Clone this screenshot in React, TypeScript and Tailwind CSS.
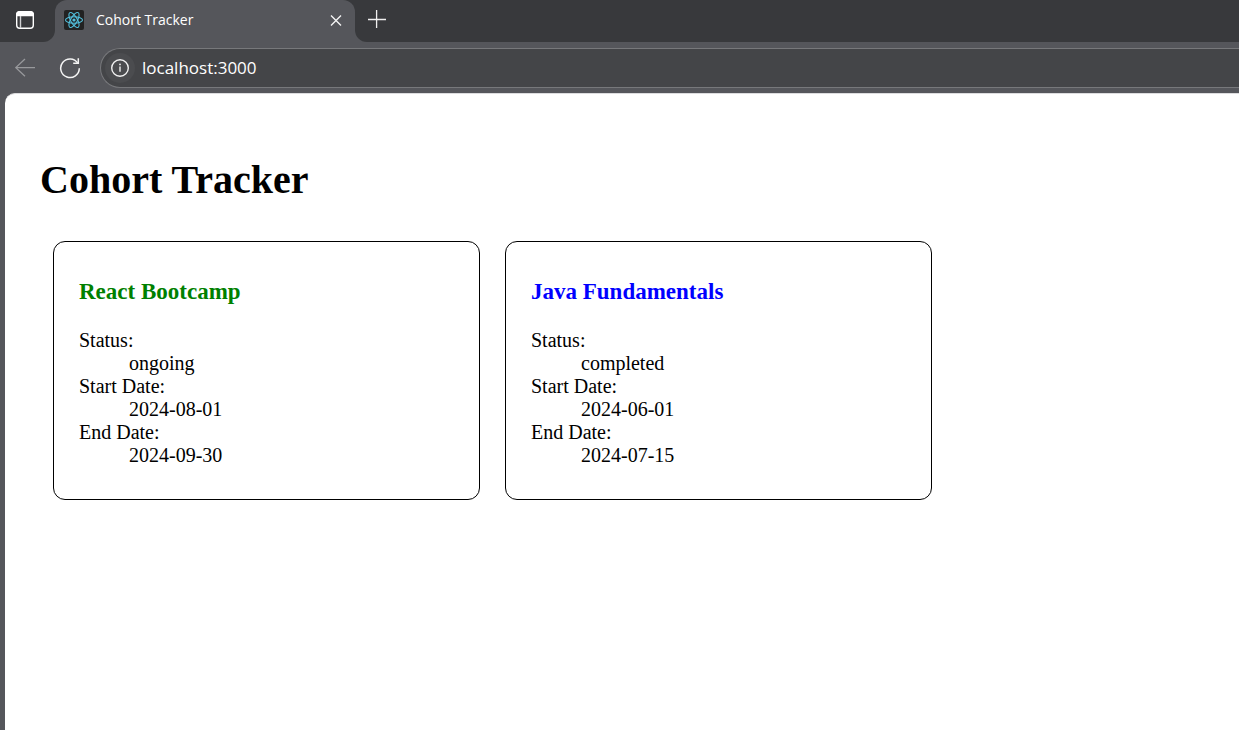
type Cohort = {
  name: string;
  status: "ongoing" | "completed";
  start: string;
  end: string;
};

const cohorts: Cohort[] = [
  { name: "React Bootcamp", status: "ongoing", start: "2024-08-01", end: "2024-09-30" },
  { name: "Java Fundamentals", status: "completed", start: "2024-06-01", end: "2024-07-15" },
];

function TabActionsIcon() {
  return (
    <svg width="20" height="20" viewBox="0 0 20 20" fill="none" stroke="#fff" strokeWidth="1.4" aria-hidden="true">
      <rect x="1.7" y="1.7" width="16.6" height="16.6" rx="3" />
      <path d="M1.7 5.5V4.7a3 3 0 0 1 3-3h10.6a3 3 0 0 1 3 3v.8z" fill="#fff" />
      <path d="M5.5 6v12" stroke="#d0d0d2" />
    </svg>
  );
}

function ReactIcon() {
  return (
    <svg width="20" height="20" viewBox="0 0 20 20" fill="none" stroke="#53c1de" strokeWidth="1.1" aria-hidden="true">
      <rect width="20" height="20" rx="2" fill="#222222" stroke="none" />
      <ellipse cx="10" cy="10" rx="8.5" ry="3.3" />
      <ellipse cx="10" cy="10" rx="8.5" ry="3.3" transform="rotate(60 10 10)" />
      <ellipse cx="10" cy="10" rx="8.5" ry="3.3" transform="rotate(120 10 10)" />
      <circle cx="10" cy="10" r="1.6" fill="#53c1de" stroke="none" />
    </svg>
  );
}

function CloseIcon() {
  return (
    <svg width="12" height="12" viewBox="0 0 12 12" stroke="#f4f4f4" strokeWidth="1.4" aria-hidden="true">
      <path d="M1 1.5l10 10M11 1.5l-10 10" />
    </svg>
  );
}

function PlusIcon() {
  return (
    <svg width="18" height="18" viewBox="0 0 18 18" stroke="#f0f0f0" strokeWidth="1.3" aria-hidden="true">
      <path d="M8.6 0v18M0 9.5h18" />
    </svg>
  );
}

function BackIcon() {
  return (
    <svg width="20" height="20" viewBox="0 0 20 20" fill="none" stroke="#98999c" strokeWidth="1.3" aria-hidden="true">
      <path d="M20 9.6H.8M10 1L.8 9.6l9.2 8.6" />
    </svg>
  );
}

function ReloadIcon() {
  return (
    <svg width="22" height="22" viewBox="0 0 22 22" fill="none" stroke="#f4f4f4" strokeWidth="1.5" aria-hidden="true">
      <path d="M18.8 6.2A9.3 9.3 0 1 0 20.3 11.3" />
      <path d="M19.3 1.3v5h-5.1" />
    </svg>
  );
}

function InfoIcon() {
  return (
    <svg width="20" height="20" viewBox="0 0 20 20" fill="none" stroke="#f0f0f0" strokeWidth="1.4" aria-hidden="true">
      <circle cx="10" cy="10" r="8.3" />
      <path d="M10 8.6v5.2" />
      <circle cx="10" cy="6.4" r=".9" fill="#f0f0f0" stroke="none" />
    </svg>
  );
}

function BrowserChrome() {
  return (
    <header className="font-['Open_Sans',sans-serif] text-white">
      <div className="flex h-[42px]">
        <div className="flex w-[55px] items-start rounded-br-xl bg-[#38393c] pl-[15px] pt-2.5">
          <button aria-label="Tab actions" type="button">
            <TabActionsIcon />
          </button>
        </div>
        <div className="w-[300px] bg-[linear-gradient(#38393c_50%,#55565b_50%)]">
          <div className="flex h-full items-start rounded-t-xl bg-[#55565b] pl-[9px] pr-[13px]">
            <div className="flex h-10 w-full items-center">
              <ReactIcon />
              <span className="ml-3 flex-1 text-sm">Cohort Tracker</span>
              <button aria-label="Close tab" type="button">
                <CloseIcon />
              </button>
            </div>
          </div>
        </div>
        <div className="flex flex-1 items-start rounded-bl-xl bg-[#38393c] pl-[13px] pt-2.5">
          <button aria-label="New tab" type="button">
            <PlusIcon />
          </button>
        </div>
      </div>
      <div className="flex h-[51px] items-center pl-[15px]">
        <button aria-label="Back" type="button" disabled>
          <BackIcon />
        </button>
        <button aria-label="Reload" type="button" className="ml-6">
          <ReloadIcon />
        </button>
        <div className="ml-[19px] flex h-10 flex-1 items-center rounded-l-full border border-r-0 border-[#77787b] bg-[#444548] pl-1">
          <button
            aria-label="View site information"
            type="button"
            className="flex size-[30px] items-center justify-center rounded-full bg-[#4b4c4f]"
          >
            <InfoIcon />
          </button>
          <input
            aria-label="Address"
            defaultValue="localhost:3000"
            className="ml-[7px] min-w-0 flex-1 bg-transparent text-[17px] text-white outline-none"
          />
        </div>
      </div>
    </header>
  );
}

function CohortCard({ cohort }: { cohort: Cohort }) {
  return (
    <article className="w-[427px] rounded-xl border border-black px-[25px] pb-8 pt-9">
      <h3
        className={`text-[23px] font-bold leading-7 ${
          cohort.status === "ongoing" ? "text-[#008000]" : "text-[#0000ff]"
        }`}
      >
        {cohort.name}
      </h3>
      <dl className="mt-[23px] text-xl leading-[23px]">
        <dt>Status:</dt>
        <dd className="ml-[50px]">{cohort.status}</dd>
        <dt>Start Date:</dt>
        <dd className="ml-[50px]">{cohort.start}</dd>
        <dt>End Date:</dt>
        <dd className="ml-[50px]">{cohort.end}</dd>
      </dl>
    </article>
  );
}

export default function App() {
  return (
    <div className="flex min-h-screen flex-col bg-[#55565b]">
      <BrowserChrome />
      <main className="ml-[5px] flex-1 rounded-tl-[10px] border-t border-[#dcdcde] bg-white px-[35px] pt-[63px] font-['Liberation_Serif',serif] text-black">
        <h1 className="text-[40px] font-bold leading-[46px]">Cohort Tracker</h1>
        <section className="ml-[13px] mt-[38px] flex flex-wrap gap-[25px]">
          {cohorts.map((cohort) => (
            <CohortCard key={cohort.name} cohort={cohort} />
          ))}
        </section>
      </main>
    </div>
  );
}
